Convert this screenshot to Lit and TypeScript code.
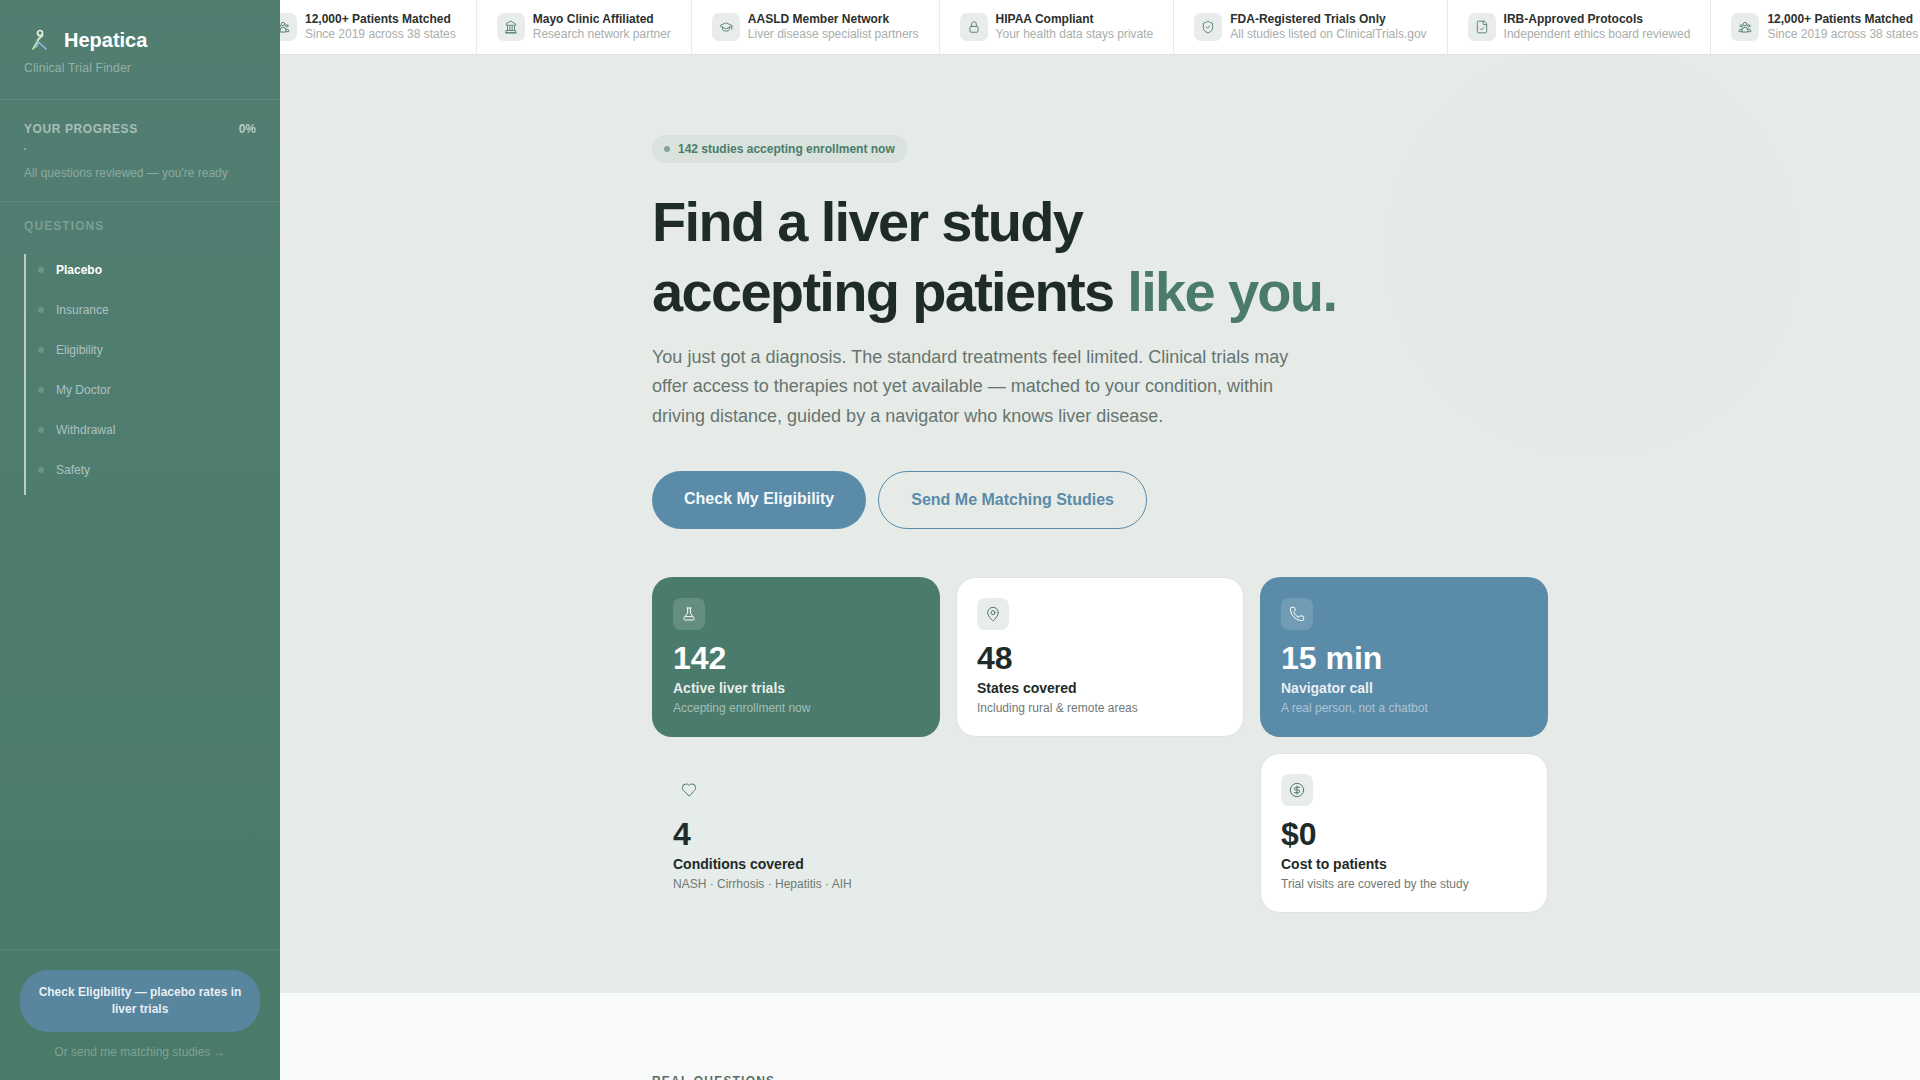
import { LitElement, html, css, svg } from "lit";
import { customElement } from "lit/decorators.js";

const I: Record<string, unknown> = {
  users: svg`<circle cx="12" cy="7" r="3"/><circle cx="5.500" cy="10" r="2"/><circle cx="18.500" cy="10" r="2"/><path d="M7 20v-2.500a5 5 0 0 1 10 0V20z"/><path d="M7 16H4.500A2.500 2.500 0 0 0 2 18.500V20h5"/><path d="M17 16h2.500a2.500 2.500 0 0 1 2.500 2.500V20h-5"/>`,
  bank: svg`<path d="M3 22h18"/><path d="M6 18v-7"/><path d="M10 18v-7"/><path d="M14 18v-7"/><path d="M18 18v-7"/><path d="M12 2l8 5v2H4V7z"/><path d="M4 18h16v4H4z"/>`,
  cap: svg`<path d="M21.400 10.900a1 1 0 0 0 0-1.800l-8.600-3.900a2 2 0 0 0-1.700 0L2.600 9.100a1 1 0 0 0 0 1.800l8.600 3.900a2 2 0 0 0 1.700 0z"/><path d="M22 10v6"/><path d="M6 12.500V16a6 3 0 0 0 12 0v-3.500"/>`,
  lock: svg`<rect x="5" y="11" width="14" height="10" rx="2"/><path d="M8 11V7a4 4 0 0 1 8 0v4"/>`,
  shield: svg`<path d="M20 13c0 5-3.500 7.500-7.700 9a1 1 0 0 1-.6 0C7.500 20.500 4 18 4 13V6a1 1 0 0 1 1-1c2 0 4.500-1.200 6.200-2.700a1.200 1.200 0 0 1 1.600 0C14.500 3.800 17 5 19 5a1 1 0 0 1 1 1z"/><path d="M9 12l2 2 4-4"/>`,
  file: svg`<path d="M15 2H6a2 2 0 0 0-2 2v16a2 2 0 0 0 2 2h12a2 2 0 0 0 2-2V7z"/><path d="M14 2v5a1 1 0 0 0 1 1h5"/><path d="M9 15l2 2 4-4"/>`,
  flask: svg`<path d="M9 3h6"/><path d="M10 3v7.500L4.600 17.800A2 2 0 0 0 6.200 21h11.600a2 2 0 0 0 1.600-3.200L14 10.500V3"/><path d="M7 16h10"/>`,
  pin: svg`<path d="M20 10c0 5-5.500 10.200-7.400 11.800a1 1 0 0 1-1.200 0C9.500 20.200 4 15 4 10a8 8 0 0 1 16 0"/><circle cx="12" cy="10" r="3"/>`,
  phone: svg`<path d="M13.800 16.600a1 1 0 0 0 1.200-.3l.4-.5a2 2 0 0 1 1.600-.8h3a2 2 0 0 1 2 2v3a2 2 0 0 1-2 2A18 18 0 0 1 2 4a2 2 0 0 1 2-2h3a2 2 0 0 1 2 2v3a2 2 0 0 1-.8 1.600l-.5.3a1 1 0 0 0-.3 1.300 14 14 0 0 0 6.400 6.400"/>`,
  heart: svg`<path d="M19 14c1.500-1.500 3-3.200 3-5.500A5.500 5.500 0 0 0 16.500 3c-1.800 0-3 .5-4.500 2-1.500-1.500-2.700-2-4.500-2A5.500 5.500 0 0 0 2 8.500c0 2.300 1.500 4 3 5.500l7 7z"/>`,
  dollar: svg`<circle cx="12" cy="12" r="10"/><path d="M16 8h-6a2 2 0 1 0 0 4h4a2 2 0 1 1 0 4H8"/><path d="M12 18V6"/>`,
};

const icon = (n: string, s: number) =>
  html`<svg width=${s} height=${s} viewBox="0 0 24 24" fill="none" stroke="currentColor" stroke-width="1.5" stroke-linecap="round" stroke-linejoin="round">${I[n]}</svg>`;

const TRUST = [
  ["users", "12,000+ Patients Matched", "Since 2019 across 38 states"],
  ["bank", "Mayo Clinic Affiliated", "Research network partner"],
  ["cap", "AASLD Member Network", "Liver disease specialist partners"],
  ["lock", "HIPAA Compliant", "Your health data stays private"],
  ["shield", "FDA-Registered Trials Only", "All studies listed on ClinicalTrials.gov"],
  ["file", "IRB-Approved Protocols", "Independent ethics board reviewed"],
  ["users", "12,000+ Patients Matched", "Since 2019 across 38 states"],
];

const STATS = [
  ["green", "flask", "142", "Active liver trials", "Accepting enrollment now"],
  ["white", "pin", "48", "States covered", "Including rural & remote areas"],
  ["blue", "phone", "15 min", "Navigator call", "A real person, not a chatbot"],
  ["clear", "heart", "4", "Conditions covered", "NASH · Cirrhosis · Hepatitis · AIH"],
  ["white", "dollar", "$0", "Cost to patients", "Trial visits are covered by the study"],
];

const QUESTIONS = ["Placebo", "Insurance", "Eligibility", "My Doctor", "Withdrawal", "Safety"];

@customElement("app-root")
export class AppRoot extends LitElement {
  static styles = css`
    :host {
      display: flex;
      height: 100vh;
      overflow: hidden;
      font-family: "Liberation Sans", Arial, sans-serif;
      background: #e6ebe8;
      color: #1e2b27;
    }
    * { box-sizing: border-box; }

    .side {
      width: 280px;
      flex: none;
      height: 100%;
      display: flex;
      flex-direction: column;
      background: linear-gradient(180deg, #527e72 0%, #4d7c6e 55%, #4a7a68 100%);
      color: #fff;
    }
    .brand {
      padding: 24px 24px 0;
      border-bottom: 1px solid rgba(255, 255, 255, 0.08);
      height: 100px;
    }
    .logo { display: flex; align-items: center; gap: 12px; height: 32px; margin-left: 4px; }
    .logo b { font-size: 20px; }
    .tag { font-size: 12px; line-height: 14px; color: rgba(255, 255, 255, 0.4); letter-spacing: 0.02em; margin-top: 5px; }
    .prog {
      height: 102px;
      padding: 22px 24px 0;
      border-bottom: 1px solid rgba(255, 255, 255, 0.08);
    }
    .prog-head {
      display: flex;
      justify-content: space-between;
      font-size: 12px;
      font-weight: 700;
      letter-spacing: 0.05em;
      color: rgba(255, 255, 255, 0.5);
      line-height: 15px;
    }
    .prog-head span:last-child { letter-spacing: 0; color: rgba(255, 255, 255, 0.6); }
    .bar { width: 2px; height: 2px; margin-top: 11px; background: rgba(255, 255, 255, 0.3); }
    .prog p { margin: 16px 0 0; font-size: 12px; line-height: 15px; color: rgba(255, 255, 255, 0.35); }
    .qs { padding: 16px 24px 0; flex: 1; }
    .qs h4 {
      margin: 0 0 16px;
      font-size: 12px;
      line-height: 16px;
      letter-spacing: 0.09em;
      font-weight: 700;
      color: rgba(255, 255, 255, 0.26);
    }
    .qlist { position: relative; }
    .qlist::before {
      content: "";
      position: absolute;
      left: 0;
      top: 4px;
      bottom: -5px;
      width: 2px;
      background: rgba(255, 255, 255, 0.62);
    }
    .q {
      height: 40px;
      display: flex;
      align-items: center;
      gap: 12px;
      padding-left: 14px;
      font-size: 12px;
      color: rgba(255, 255, 255, 0.55);
    }
    .q i { width: 6px; height: 6px; border-radius: 50%; background: rgba(255, 255, 255, 0.18); }
    .q.on { color: #fff; font-weight: 700; }
    .foot {
      border-top: 1px solid rgba(255, 255, 255, 0.08);
      padding: 20px 20px 0;
      height: 131px;
      text-align: center;
    }
    .foot-btn {
      background: #58869f;
      border-radius: 28px;
      height: 62px;
      padding: 14px 16px;
      font-size: 12px;
      line-height: 17px;
      font-weight: 700;
      color: rgba(255, 255, 255, 0.88);
    }
    .foot-link { margin-top: 13px; font-size: 12px; line-height: 14px; color: rgba(255, 255, 255, 0.3); }

    .main { flex: 1; min-width: 0; overflow: hidden; }
    .trust {
      height: 55px;
      background: #fff;
      border-bottom: 1px solid #dfe4e1;
      overflow: hidden;
    }
    .track { display: flex; width: max-content; transform: translateX(-31px); }
    .ti {
      height: 54px;
      display: flex;
      align-items: center;
      gap: 8px;
      padding: 0 20px;
      border-right: 1px solid #e6eae8;
      flex: none;
    }
    .ti-ic {
      width: 28px;
      height: 28px;
      border-radius: 7px;
      background: #e8ecea;
      color: #4a7c6a;
      display: flex;
      align-items: center;
      justify-content: center;
    }
    .ti b { display: block; font-size: 12px; line-height: 15px; color: #2a302e; }
    .ti span { display: block; font-size: 12px; line-height: 15px; color: #a7aeab; }

    .hero { position: relative; padding: 80px 0; background: #e6ebe8; overflow: hidden; }
    .hero::before {
      content: "";
      position: absolute;
      left: 1107px;
      top: -10px;
      width: 410px;
      height: 410px;
      border-radius: 50%;
      background: radial-gradient(circle, rgba(74, 124, 106, 0.008) 0%, rgba(74, 124, 106, 0.008) 80%, transparent 100%);
    }
    .wrap { position: relative; width: 896px; margin: 0 auto; }
    .pill {
      display: inline-flex;
      align-items: center;
      gap: 8px;
      height: 28px;
      padding: 0 12px;
      border-radius: 14px;
      background: #d9e2dd;
      color: #4a7c6a;
      font-size: 12px;
      font-weight: 700;
      vertical-align: top;
    }
    .pill i { width: 6px; height: 6px; border-radius: 50%; background: #4a7c6a; opacity: 0.6; }
    h1 {
      margin: 24px 0 15.7px;
      font-size: 56px;
      line-height: 70px;
      font-weight: 700;
      letter-spacing: -0.03em;
      color: #1e2b27;
    }
    h1 em { font-style: normal; color: #4a7b6c; }
    .lead { margin: 0; width: 640px; font-size: 18px; line-height: 29.7px; color: #66756f; }
    .cta { display: flex; gap: 12px; margin-top: 39.2px; }
    .cta a { display: block; border-radius: 29px; font-size: 16px; line-height: 20px; font-weight: 700; }
    .pri { background: #5a8ba8; color: #f4f8fa; padding: 18px 32px; }
    .sec { border: 1px solid #5a8ba8; color: #5a8ba8; padding: 18px 32px; }
    .grid { display: grid; grid-template-columns: repeat(3, 288px); gap: 16px; margin-top: 48px; }
    .card { height: 160px; border-radius: 20px; border: 1px solid transparent; padding: 20px; }
    .card.green { background: #4a7b6c; color: #fff; }
    .card.blue { background: #5a8ba8; color: #fff; }
    .card.white { background: #fff; border-color: #dfe4e1; }
    .card.clear { background: #e6ece9; border-color: #e6ebe8; grid-column: 1; }
    .card.clear + .card { grid-column: 3; }
    .c-ic {
      width: 32px;
      height: 32px;
      border-radius: 8px;
      display: flex;
      align-items: center;
      justify-content: center;
      background: #e8ecea;
      color: #4a7c6a;
    }
    .green .c-ic, .blue .c-ic { background: rgba(255, 255, 255, 0.15); color: #fff; }
    .clear .c-ic { background: transparent; }
    .num { margin-top: 10px; font-size: 32px; line-height: 36px; font-weight: 700; color: #1e2b27; }
    .green .num, .blue .num { color: #fff; }
    .lab { margin-top: 4px; font-size: 14px; line-height: 16px; font-weight: 700; color: #222a27; }
    .green .lab, .blue .lab { color: rgba(255, 255, 255, 0.88); }
    .sub { margin-top: 4px; font-size: 12px; line-height: 16px; color: #6f7a76; }
    .green .sub, .blue .sub { color: rgba(255, 255, 255, 0.5); }

    .next { background: #f8faf9; padding-top: 80px; height: 300px; }
    .eyebrow { font-size: 12px; line-height: 17px; font-weight: 700; letter-spacing: 0.1em; color: #5a6e66; }
  `;

  render() {
    return html`
      <aside class="side">
        <div class="brand">
          <div class="logo">
            <svg width="24" height="24" viewBox="0 0 24 24" fill="none" stroke-width="1.700" stroke-linecap="round">
              <path d="M10 11.500L14.500 7.500" stroke="#e4f2e0"/>
              <circle cx="12" cy="5" r="2.500" stroke="#e8f4dc"/>
              <path d="M12.500 8L5 21" stroke="#c4e4a4"/>
              <path d="M10.500 14L18 21M10.500 14L8 19" stroke="#8cbce4"/>
            </svg>
            <b>Hepatica</b>
          </div>
          <div class="tag">Clinical Trial Finder</div>
        </div>
        <div class="prog">
          <div class="prog-head"><span>YOUR PROGRESS</span><span>0%</span></div>
          <div class="bar"></div>
          <p>All questions reviewed — you're ready</p>
        </div>
        <div class="qs">
          <h4>QUESTIONS</h4>
          <div class="qlist">
            ${QUESTIONS.map((q, i) => html`<div class="q ${i === 0 ? "on" : ""}"><i></i>${q}</div>`)}
          </div>
        </div>
        <div class="foot">
          <div class="foot-btn">Check Eligibility — placebo rates in liver trials</div>
          <div class="foot-link">Or send me matching studies →</div>
        </div>
      </aside>
      <main class="main">
        <div class="trust">
          <div class="track">
            ${TRUST.map(
              ([ic, t, s]) => html`<div class="ti">
                <div class="ti-ic">${icon(ic, 14)}</div>
                <div><b>${t}</b><span>${s}</span></div>
              </div>`
            )}
          </div>
        </div>
        <section class="hero">
          <div class="wrap">
            <div class="pill"><i></i>142 studies accepting enrollment now</div>
            <h1>Find a liver study<br />accepting patients <em>like you.</em></h1>
            <p class="lead">
              You just got a diagnosis. The standard treatments feel limited. Clinical trials may offer access to
              therapies not yet available — matched to your condition, within driving distance, guided by a navigator
              who knows liver disease.
            </p>
            <div class="cta">
              <a class="pri">Check My Eligibility</a>
              <a class="sec">Send Me Matching Studies</a>
            </div>
            <div class="grid">
              ${STATS.map(
                ([k, ic, n, l, s]) => html`<div class="card ${k}">
                  <div class="c-ic">${icon(ic, 16)}</div>
                  <div class="num">${n}</div>
                  <div class="lab">${l}</div>
                  <div class="sub">${s}</div>
                </div>`
              )}
            </div>
          </div>
        </section>
        <section class="next">
          <div class="wrap"><div class="eyebrow">REAL QUESTIONS</div></div>
        </section>
      </main>
    `;
  }
}
